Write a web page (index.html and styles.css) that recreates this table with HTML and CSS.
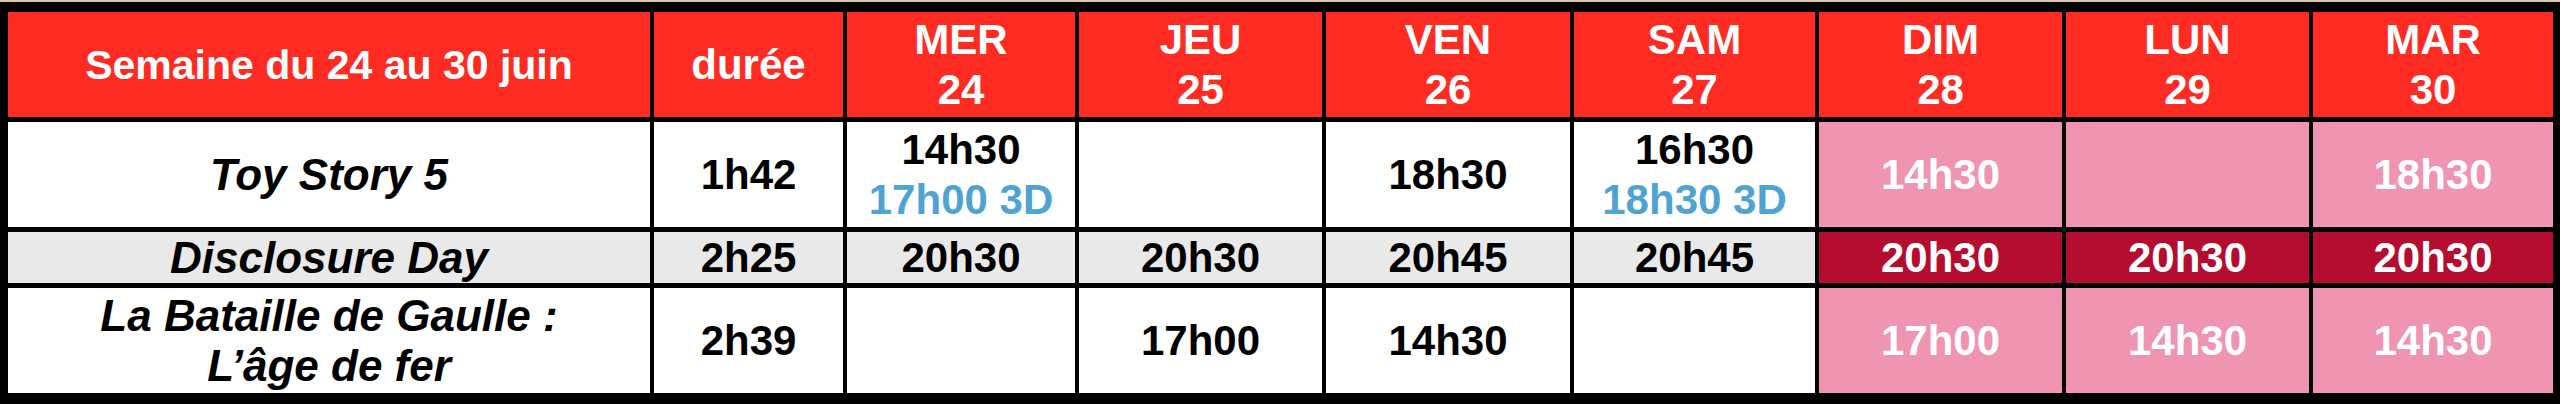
FILE: index.html
```html
<!DOCTYPE html>
<html lang="fr">
<head>
<meta charset="utf-8">
<title>Semaine du 24 au 30 juin</title>
<link rel="stylesheet" href="styles.css">
</head>
<body>
<div class="schedule">
  <div class="cell head week">Semaine du 24 au 30 juin</div>
  <div class="cell head">durée</div>
  <div class="cell head"><span>MER</span><span>24</span></div>
  <div class="cell head"><span>JEU</span><span>25</span></div>
  <div class="cell head"><span>VEN</span><span>26</span></div>
  <div class="cell head"><span>SAM</span><span>27</span></div>
  <div class="cell head"><span>DIM</span><span>28</span></div>
  <div class="cell head"><span>LUN</span><span>29</span></div>
  <div class="cell head"><span>MAR</span><span>30</span></div>

  <div class="cell title">Toy Story 5</div>
  <div class="cell">1h42</div>
  <div class="cell"><span>14h30</span><span class="td">17h00 3D</span></div>
  <div class="cell"></div>
  <div class="cell">18h30</div>
  <div class="cell"><span>16h30</span><span class="td">18h30 3D</span></div>
  <div class="cell pink">14h30</div>
  <div class="cell pink"></div>
  <div class="cell pink">18h30</div>

  <div class="cell title grey">Disclosure Day</div>
  <div class="cell grey">2h25</div>
  <div class="cell grey">20h30</div>
  <div class="cell grey">20h30</div>
  <div class="cell grey">20h45</div>
  <div class="cell grey">20h45</div>
  <div class="cell dark">20h30</div>
  <div class="cell dark">20h30</div>
  <div class="cell dark">20h30</div>

  <div class="cell title"><span>La Bataille de Gaulle :</span><span>L’âge de fer</span></div>
  <div class="cell">2h39</div>
  <div class="cell"></div>
  <div class="cell">17h00</div>
  <div class="cell">14h30</div>
  <div class="cell"></div>
  <div class="cell pink">17h00</div>
  <div class="cell pink">14h30</div>
  <div class="cell pink">14h30</div>
</div>
</body>
</html>
```
FILE: styles.css
```css
html, body {
  margin: 0;
  padding: 0;
}
body {
  background: #dcc6a6;
  width: 2560px;
  height: 404px;
  overflow: hidden;
}
.schedule {
  margin-top: 2px;
  background: #000;
  padding: 10px 7px 11px 8px;
  display: grid;
  grid-template-columns: 642px 189px 228px 243px 244px 241px 243px 243px 240px;
  grid-template-rows: 105px 105px 51px 105px;
  column-gap: 4px;
  row-gap: 5px;
  font-family: "Liberation Sans", Arial, sans-serif;
  font-weight: bold;
  font-size: 42px;
  line-height: 50px;
  color: #000;
}
.cell {
  background: #fff;
  display: flex;
  flex-direction: column;
  align-items: center;
  justify-content: center;
  text-align: center;
  white-space: nowrap;
}
.head {
  background: #fe2b23;
  color: #fff;
}
.week {
  font-size: 41px;
}
.title {
  font-style: italic;
  font-size: 44px;
}
.grey {
  background: #e9e9e9;
}
.pink {
  background: #ef94b1;
  color: #fff;
}
.dark {
  background: #b50d2f;
  color: #fff;
}
.td {
  color: #4fa3d3;
}
```
